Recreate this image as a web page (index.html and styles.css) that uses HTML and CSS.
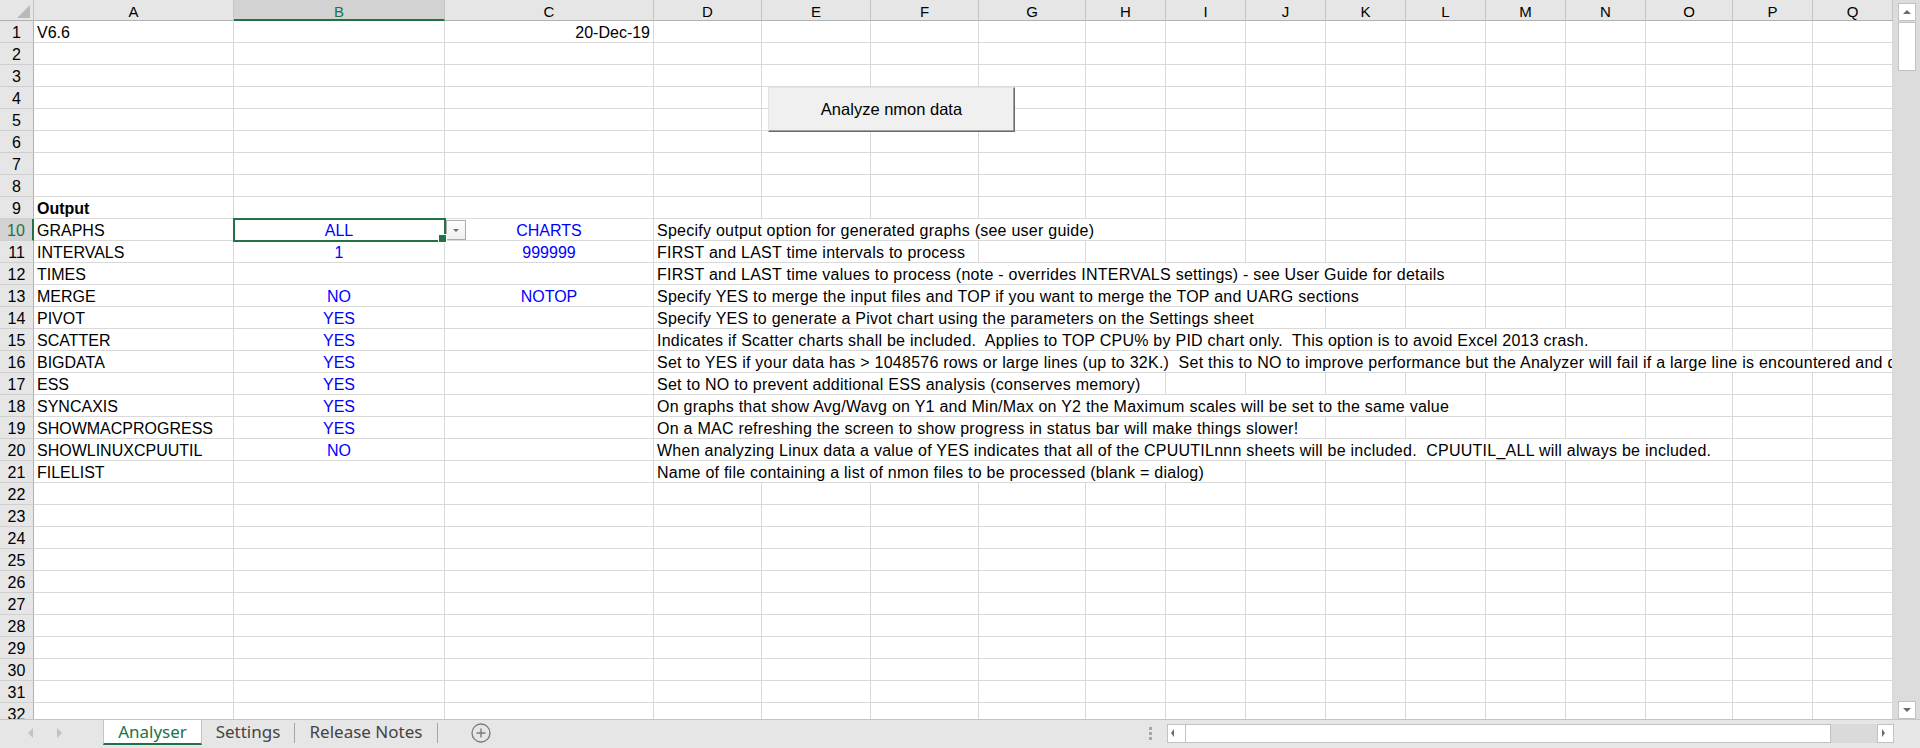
FILE: index.html
```html
<!DOCTYPE html>
<html lang="en">
<head>
  <meta charset="UTF-8" />
  <title>nmon analyser - Analyser</title>
  <link rel="stylesheet" href="styles.css">
</head>
<body>
<div class="app">
  <div class="top">
    <div class="sheet">
      <div class="row hd">
        <div class="c corner"><svg width="33" height="20" viewBox="0 0 33 20"><polygon points="30,5 30,18 17,18" fill="#b9b9b9"/></svg></div>
        <div class="c">A</div><div class="c on">B</div><div class="c">C</div><div class="c">D</div><div class="c">E</div><div class="c">F</div><div class="c">G</div><div class="c">H</div><div class="c">I</div><div class="c">J</div><div class="c">K</div><div class="c">L</div><div class="c">M</div><div class="c">N</div><div class="c">O</div><div class="c">P</div><div class="c">Q</div>
      </div>

      <div class="row"><div class="c rh">1</div><div class="c">V6.6</div><div class="c"></div><div class="c r">20-Dec-19</div><div class="c"></div><div class="c"></div><div class="c"></div><div class="c"></div><div class="c"></div><div class="c"></div><div class="c"></div><div class="c"></div><div class="c"></div><div class="c"></div><div class="c"></div><div class="c"></div><div class="c"></div><div class="c"></div></div>
      <div class="row"><div class="c rh">2</div><div class="c"></div><div class="c"></div><div class="c"></div><div class="c"></div><div class="c"></div><div class="c"></div><div class="c"></div><div class="c"></div><div class="c"></div><div class="c"></div><div class="c"></div><div class="c"></div><div class="c"></div><div class="c"></div><div class="c"></div><div class="c"></div><div class="c"></div></div>
      <div class="row"><div class="c rh">3</div><div class="c"></div><div class="c"></div><div class="c"></div><div class="c"></div><div class="c"></div><div class="c"></div><div class="c"></div><div class="c"></div><div class="c"></div><div class="c"></div><div class="c"></div><div class="c"></div><div class="c"></div><div class="c"></div><div class="c"></div><div class="c"></div><div class="c"></div></div>
      <div class="row"><div class="c rh">4</div><div class="c"></div><div class="c"></div><div class="c"></div><div class="c"></div><div class="c"></div><div class="c"></div><div class="c"></div><div class="c"></div><div class="c"></div><div class="c"></div><div class="c"></div><div class="c"></div><div class="c"></div><div class="c"></div><div class="c"></div><div class="c"></div><div class="c"></div></div>
      <div class="row"><div class="c rh">5</div><div class="c"></div><div class="c"></div><div class="c"></div><div class="c"></div><div class="c"></div><div class="c"></div><div class="c"></div><div class="c"></div><div class="c"></div><div class="c"></div><div class="c"></div><div class="c"></div><div class="c"></div><div class="c"></div><div class="c"></div><div class="c"></div><div class="c"></div></div>
      <div class="row"><div class="c rh">6</div><div class="c"></div><div class="c"></div><div class="c"></div><div class="c"></div><div class="c"></div><div class="c"></div><div class="c"></div><div class="c"></div><div class="c"></div><div class="c"></div><div class="c"></div><div class="c"></div><div class="c"></div><div class="c"></div><div class="c"></div><div class="c"></div><div class="c"></div></div>
      <div class="row"><div class="c rh">7</div><div class="c"></div><div class="c"></div><div class="c"></div><div class="c"></div><div class="c"></div><div class="c"></div><div class="c"></div><div class="c"></div><div class="c"></div><div class="c"></div><div class="c"></div><div class="c"></div><div class="c"></div><div class="c"></div><div class="c"></div><div class="c"></div><div class="c"></div></div>
      <div class="row"><div class="c rh">8</div><div class="c"></div><div class="c"></div><div class="c"></div><div class="c"></div><div class="c"></div><div class="c"></div><div class="c"></div><div class="c"></div><div class="c"></div><div class="c"></div><div class="c"></div><div class="c"></div><div class="c"></div><div class="c"></div><div class="c"></div><div class="c"></div><div class="c"></div></div>
      <div class="row"><div class="c rh">9</div><div class="c b">Output</div><div class="c"></div><div class="c"></div><div class="c"></div><div class="c"></div><div class="c"></div><div class="c"></div><div class="c"></div><div class="c"></div><div class="c"></div><div class="c"></div><div class="c"></div><div class="c"></div><div class="c"></div><div class="c"></div><div class="c"></div><div class="c"></div></div>
      <div class="row"><div class="c rh on">10</div><div class="c">GRAPHS</div><div class="c v sel">ALL</div><div class="c v pick">CHARTS<span class="dd"><svg width="18" height="18" viewBox="0 0 18 18"><polygon points="6,8 12,8 9,11" fill="#6a6a6a"/></svg></span></div><div class="c note s5">Specify output option for generated graphs (see user guide)</div><div class="c"></div><div class="c"></div><div class="c"></div><div class="c"></div><div class="c"></div><div class="c"></div><div class="c"></div><div class="c"></div><div class="c"></div></div>
      <div class="row"><div class="c rh">11</div><div class="c">INTERVALS</div><div class="c v">1</div><div class="c v">999999</div><div class="c note s3">FIRST and LAST time intervals to process</div><div class="c"></div><div class="c"></div><div class="c"></div><div class="c"></div><div class="c"></div><div class="c"></div><div class="c"></div><div class="c"></div><div class="c"></div><div class="c"></div><div class="c"></div></div>
      <div class="row"><div class="c rh">12</div><div class="c">TIMES</div><div class="c"></div><div class="c"></div><div class="c note s9">FIRST and LAST time values to process (note - overrides INTERVALS settings) - see User Guide for details</div><div class="c"></div><div class="c"></div><div class="c"></div><div class="c"></div><div class="c"></div></div>
      <div class="row"><div class="c rh">13</div><div class="c">MERGE</div><div class="c v">NO</div><div class="c v">NOTOP</div><div class="c note s8">Specify YES to merge the input files and TOP if you want to merge the TOP and UARG sections</div><div class="c"></div><div class="c"></div><div class="c"></div><div class="c"></div><div class="c"></div><div class="c"></div></div>
      <div class="row"><div class="c rh">14</div><div class="c">PIVOT</div><div class="c v">YES</div><div class="c"></div><div class="c note s7">Specify YES to generate a Pivot chart using the parameters on the Settings sheet</div><div class="c"></div><div class="c"></div><div class="c"></div><div class="c"></div><div class="c"></div><div class="c"></div><div class="c"></div></div>
      <div class="row"><div class="c rh">15</div><div class="c">SCATTER</div><div class="c v">YES</div><div class="c"></div><div class="c note s11">Indicates if Scatter charts shall be included.  Applies to TOP CPU% by PID chart only.  This option is to avoid Excel 2013 crash.</div><div class="c"></div><div class="c"></div><div class="c"></div></div>
      <div class="row"><div class="c rh">16</div><div class="c">BIGDATA</div><div class="c v">YES</div><div class="c"></div><div class="c note s14">Set to YES if your data has &gt; 1048576 rows or large lines (up to 32K.)  Set this to NO to improve performance but the Analyzer will fail if a large line is encountered and data</div></div>
      <div class="row"><div class="c rh">17</div><div class="c">ESS</div><div class="c v">YES</div><div class="c"></div><div class="c note s5">Set to NO to prevent additional ESS analysis (conserves memory)</div><div class="c"></div><div class="c"></div><div class="c"></div><div class="c"></div><div class="c"></div><div class="c"></div><div class="c"></div><div class="c"></div><div class="c"></div></div>
      <div class="row"><div class="c rh">18</div><div class="c">SYNCAXIS</div><div class="c v">YES</div><div class="c"></div><div class="c note s9">On graphs that show Avg/Wavg on Y1 and Min/Max on Y2 the Maximum scales will be set to the same value</div><div class="c"></div><div class="c"></div><div class="c"></div><div class="c"></div><div class="c"></div></div>
      <div class="row"><div class="c rh">19</div><div class="c">SHOWMACPROGRESS</div><div class="c v">YES</div><div class="c"></div><div class="c note s7">On a MAC refreshing the screen to show progress in status bar will make things slower!</div><div class="c"></div><div class="c"></div><div class="c"></div><div class="c"></div><div class="c"></div><div class="c"></div><div class="c"></div></div>
      <div class="row"><div class="c rh">20</div><div class="c">SHOWLINUXCPUUTIL</div><div class="c v">NO</div><div class="c"></div><div class="c note s12">When analyzing Linux data a value of YES indicates that all of the CPUUTILnnn sheets will be included.  CPUUTIL_ALL will always be included.</div><div class="c"></div><div class="c"></div></div>
      <div class="row"><div class="c rh">21</div><div class="c">FILELIST</div><div class="c"></div><div class="c"></div><div class="c note s6">Name of file containing a list of nmon files to be processed (blank = dialog)</div><div class="c"></div><div class="c"></div><div class="c"></div><div class="c"></div><div class="c"></div><div class="c"></div><div class="c"></div><div class="c"></div></div>
      <div class="row"><div class="c rh">22</div><div class="c"></div><div class="c"></div><div class="c"></div><div class="c"></div><div class="c"></div><div class="c"></div><div class="c"></div><div class="c"></div><div class="c"></div><div class="c"></div><div class="c"></div><div class="c"></div><div class="c"></div><div class="c"></div><div class="c"></div><div class="c"></div><div class="c"></div></div>
      <div class="row"><div class="c rh">23</div><div class="c"></div><div class="c"></div><div class="c"></div><div class="c"></div><div class="c"></div><div class="c"></div><div class="c"></div><div class="c"></div><div class="c"></div><div class="c"></div><div class="c"></div><div class="c"></div><div class="c"></div><div class="c"></div><div class="c"></div><div class="c"></div><div class="c"></div></div>
      <div class="row"><div class="c rh">24</div><div class="c"></div><div class="c"></div><div class="c"></div><div class="c"></div><div class="c"></div><div class="c"></div><div class="c"></div><div class="c"></div><div class="c"></div><div class="c"></div><div class="c"></div><div class="c"></div><div class="c"></div><div class="c"></div><div class="c"></div><div class="c"></div><div class="c"></div></div>
      <div class="row"><div class="c rh">25</div><div class="c"></div><div class="c"></div><div class="c"></div><div class="c"></div><div class="c"></div><div class="c"></div><div class="c"></div><div class="c"></div><div class="c"></div><div class="c"></div><div class="c"></div><div class="c"></div><div class="c"></div><div class="c"></div><div class="c"></div><div class="c"></div><div class="c"></div></div>
      <div class="row"><div class="c rh">26</div><div class="c"></div><div class="c"></div><div class="c"></div><div class="c"></div><div class="c"></div><div class="c"></div><div class="c"></div><div class="c"></div><div class="c"></div><div class="c"></div><div class="c"></div><div class="c"></div><div class="c"></div><div class="c"></div><div class="c"></div><div class="c"></div><div class="c"></div></div>
      <div class="row"><div class="c rh">27</div><div class="c"></div><div class="c"></div><div class="c"></div><div class="c"></div><div class="c"></div><div class="c"></div><div class="c"></div><div class="c"></div><div class="c"></div><div class="c"></div><div class="c"></div><div class="c"></div><div class="c"></div><div class="c"></div><div class="c"></div><div class="c"></div><div class="c"></div></div>
      <div class="row"><div class="c rh">28</div><div class="c"></div><div class="c"></div><div class="c"></div><div class="c"></div><div class="c"></div><div class="c"></div><div class="c"></div><div class="c"></div><div class="c"></div><div class="c"></div><div class="c"></div><div class="c"></div><div class="c"></div><div class="c"></div><div class="c"></div><div class="c"></div><div class="c"></div></div>
      <div class="row"><div class="c rh">29</div><div class="c"></div><div class="c"></div><div class="c"></div><div class="c"></div><div class="c"></div><div class="c"></div><div class="c"></div><div class="c"></div><div class="c"></div><div class="c"></div><div class="c"></div><div class="c"></div><div class="c"></div><div class="c"></div><div class="c"></div><div class="c"></div><div class="c"></div></div>
      <div class="row"><div class="c rh">30</div><div class="c"></div><div class="c"></div><div class="c"></div><div class="c"></div><div class="c"></div><div class="c"></div><div class="c"></div><div class="c"></div><div class="c"></div><div class="c"></div><div class="c"></div><div class="c"></div><div class="c"></div><div class="c"></div><div class="c"></div><div class="c"></div><div class="c"></div></div>
      <div class="row"><div class="c rh">31</div><div class="c"></div><div class="c"></div><div class="c"></div><div class="c"></div><div class="c"></div><div class="c"></div><div class="c"></div><div class="c"></div><div class="c"></div><div class="c"></div><div class="c"></div><div class="c"></div><div class="c"></div><div class="c"></div><div class="c"></div><div class="c"></div><div class="c"></div></div>
      <div class="row"><div class="c rh">32</div><div class="c"></div><div class="c"></div><div class="c"></div><div class="c"></div><div class="c"></div><div class="c"></div><div class="c"></div><div class="c"></div><div class="c"></div><div class="c"></div><div class="c"></div><div class="c"></div><div class="c"></div><div class="c"></div><div class="c"></div><div class="c"></div><div class="c"></div></div>

      <button class="run">Analyze nmon data</button>
    </div>

    <div class="vscroll">
      <div class="sbtn"><svg width="16" height="16" viewBox="0 0 16 16"><polygon points="4,10 12,10 8,6" fill="#6a6a6a"/></svg></div>
      <div class="vthumb"></div>
      <div class="fill"></div>
      <div class="sbtn"><svg width="16" height="16" viewBox="0 0 16 16"><polygon points="4,6 12,6 8,10" fill="#6a6a6a"/></svg></div>
    </div>
  </div>

  <div class="tabs">
    <div class="nav">
      <svg width="6" height="10" viewBox="0 0 6 10"><polygon points="5,0 5,10 0,5" fill="#c2c2c2"/></svg>
      <svg width="6" height="10" viewBox="0 0 6 10"><polygon points="1,0 1,10 6,5" fill="#c2c2c2"/></svg>
    </div>
    <div class="tab on">Analyser</div>
    <div class="tab w1">Settings</div>
    <span class="sep"></span>
    <div class="tab w2">Release Notes</div>
    <span class="sep"></span>
    <div class="add"><svg width="20" height="20" viewBox="0 0 20 20"><circle cx="10" cy="10" r="9" fill="none" stroke="#7a7a7a" stroke-width="1.3"/><path d="M10 5.5V14.5M5.5 10H14.5" stroke="#7a7a7a" stroke-width="1.4"/></svg></div>
    <div class="fill"></div>
    <div class="split"><i></i><i></i><i></i></div>
    <div class="hscroll">
      <div class="sbtn"><svg width="10" height="17" viewBox="0 0 10 17"><polygon points="6,4 6,12 3,8" fill="#6a6a6a"/></svg></div>
      <div class="hthumb"></div>
      <div class="fill"></div>
      <div class="sbtn"><svg width="10" height="17" viewBox="0 0 10 17"><polygon points="4,4 4,12 7,8" fill="#6a6a6a"/></svg></div>
    </div>
  </div>
</div>
</body>
</html>
```

FILE: styles.css
```css
* {
  box-sizing: border-box;
}
body {
  margin: 0;
  font-family: "Liberation Sans", Arial, sans-serif;
  background: #fff;
  overflow: hidden;
}
.app {
  width: 1920px;
  height: 748px;
  display: flex;
  flex-direction: column;
}
.top {
  display: flex;
  height: 719px;
}
.sheet {
  position: relative;
  width: 1893px;
  overflow: hidden;
}

/* grid */
.row {
  display: grid;
  grid-template-columns: 34px 200px 211px 209px 108px 109px 108px 107px repeat(7, 80px) 87px 80px 80px;
}
.c {
  height: 22px;
  padding: 3px 3px 0;
  font-size: 16px;
  line-height: 18px;
  color: #000;
  border-right: 1px solid #d9d9d9;
  border-bottom: 1px solid #d9d9d9;
  white-space: pre;
  overflow: hidden;
}
.hd .c {
  height: 21px;
  padding: 2px 0 0;
  font-size: 15px;
  line-height: 19px;
  text-align: center;
  background: #e6e6e6;
  border-right-color: #c4c4c4;
  border-bottom-color: #b1b1b1;
}
.hd .corner {
  padding: 0;
}
.hd .corner svg {
  display: block;
}
.hd .on {
  background: #d2d2d2;
  color: #217346;
  border-bottom: 2px solid #217346;
}
.rh {
  padding: 3px 0 0;
  text-align: center;
  background: #e6e6e6;
  border-right-color: #b1b1b1;
  border-bottom-color: #cfcfcf;
}
.rh.on {
  background: #d2d2d2;
  color: #217346;
  border-right: 2px solid #217346;
}
.v {
  color: #0000ff;
  text-align: center;
}
.r {
  text-align: right;
}
.b {
  font-weight: bold;
}
.note {
  letter-spacing: .25px;
}
.s3 { grid-column: span 3; }
.s5 { grid-column: span 5; }
.s6 { grid-column: span 6; }
.s7 { grid-column: span 7; }
.s8 { grid-column: span 8; }
.s9 { grid-column: span 9; }
.s11 { grid-column: span 11; }
.s12 { grid-column: span 12; }
.s14 { grid-column: span 14; }

.sel {
  position: relative;
  z-index: 2;
  overflow: visible;
  outline: 2px solid #217346;
  outline-offset: -1px;
}
.sel::after {
  content: "";
  position: absolute;
  right: -3px;
  bottom: -3px;
  width: 7px;
  height: 7px;
  background: #217346;
  border: 1px solid #fff;
}
.pick {
  position: relative;
}
.dd {
  position: absolute;
  left: 1px;
  top: 1px;
  width: 20px;
  height: 20px;
  border: 1px solid #ababab;
  background: linear-gradient(#fdfdfd, #efefef);
}
.dd svg {
  display: block;
}

.run {
  position: absolute;
  left: 768px;
  top: 87px;
  width: 247px;
  height: 45px;
  padding: 0;
  font-family: "Liberation Sans", Arial, sans-serif;
  font-size: 16.5px;
  color: #000;
  background: #f0f0f0;
  border: 1px solid;
  border-color: #e3e3e3 #696969 #696969 #e3e3e3;
  box-shadow: inset -1px -1px #a0a0a0;
}

/* scrollbars */
.vscroll {
  width: 27px;
  display: flex;
  flex-direction: column;
  padding: 3px 4px 0 5px;
  background: #dcdcdc;
}
.sbtn {
  background: #fff;
  border: 1px solid #c2c2c2;
}
.sbtn svg {
  display: block;
}
.vscroll .sbtn {
  height: 18px;
}
.vthumb {
  height: 49px;
  margin-top: 1px;
  background: #fff;
  border: 1px solid #c2c2c2;
}
.fill {
  flex: 1;
}

/* sheet tabs */
.tabs {
  height: 29px;
  display: flex;
  align-items: flex-start;
  background: #e6e6e6;
  border-top: 1px solid #c4c4c4;
  font-family: "Noto Sans", sans-serif;
}
.nav {
  width: 103px;
  display: flex;
  gap: 22px;
  padding: 8px 0 0 28px;
}
.tab {
  height: 25px;
  padding-top: 2px;
  font-size: 17px;
  line-height: 19px;
  text-align: center;
  color: #444;
}
.tab.on {
  width: 99px;
  background: #fff;
  color: #217346;
  border-left: 1px solid #c4c4c4;
  border-right: 1px solid #c4c4c4;
  border-bottom: 2px solid #217346;
}
.w1 {
  width: 92px;
}
.w2 {
  width: 142px;
}
.sep {
  width: 1px;
  height: 20px;
  margin-top: 3px;
  background: #a6a6a6;
}
.add {
  margin: 3px 0 0 33px;
}
.add svg {
  display: block;
}
.split {
  display: flex;
  flex-direction: column;
  gap: 2px;
  margin: 7px 15px 0 0;
}
.split i {
  width: 3px;
  height: 3px;
  background: #a6a6a6;
}
.hscroll {
  width: 727px;
  height: 19px;
  margin: 4px 26px 0 0;
  display: flex;
  background: #dadada;
}
.hscroll .sbtn:first-child {
  width: 19px;
}
.hscroll .sbtn:last-child {
  width: 17px;
}
.hthumb {
  width: 645px;
  background: #fff;
  border: 1px solid #c2c2c2;
  border-left: 0;
}
```
